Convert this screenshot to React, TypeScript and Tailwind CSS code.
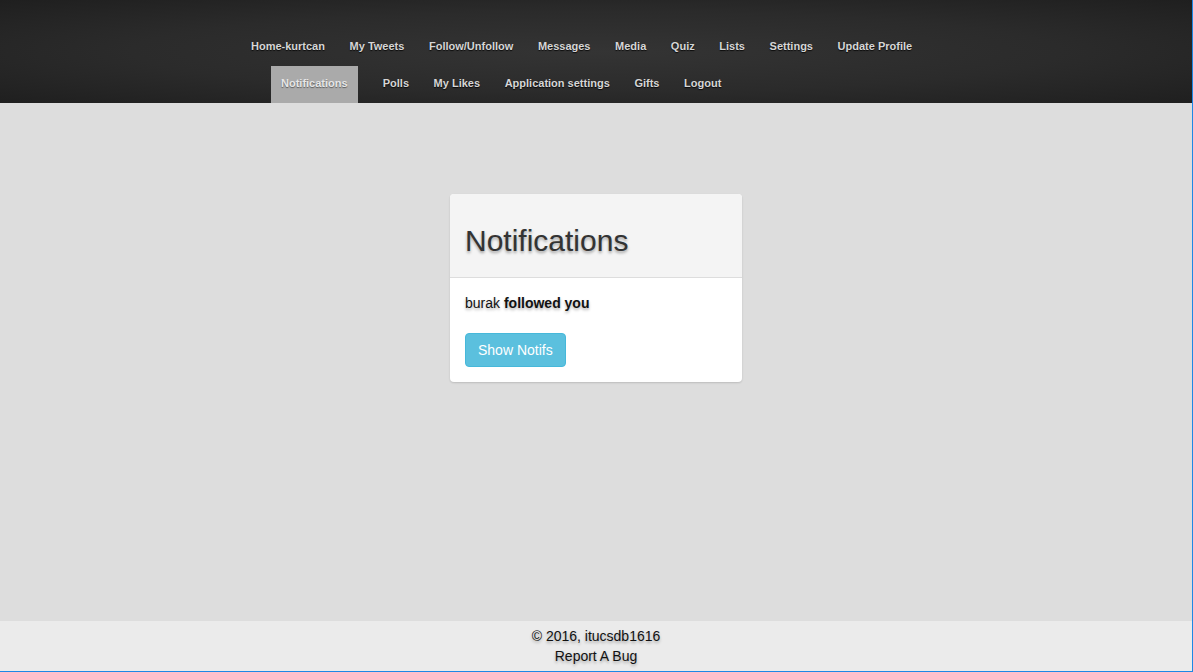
import React from "react";

const topRow = [
  "Home-kurtcan",
  "My Tweets",
  "Follow/Unfollow",
  "Messages",
  "Media",
  "Quiz",
  "Lists",
  "Settings",
  "Update Profile",
];

const bottomRow = ["Polls", "My Likes", "Application settings", "Gifts", "Logout"];

function NavItem({ label, active = false }: { label: string; active?: boolean }) {
  return (
    <a
      href="#"
      className={`flex h-[37px] items-center px-[10px] pb-[2px] text-[11px] font-bold leading-none ${
        active
          ? "mr-[10.5px] bg-[#aaaaaa] text-[#e6e6e6] [text-shadow:0_1px_1px_rgba(0,0,0,0.45)]"
          : "text-[#d6d6d6] [text-shadow:0_1px_1px_rgba(0,0,0,0.8)]"
      }`}
    >
      {label}
    </a>
  );
}

export default function App() {
  return (
    <div className="flex h-screen flex-col border-r border-b border-[#1e88e5] bg-[#dddddd] font-['Liberation_Sans',Arial,sans-serif]">
      {/* header / nav */}
      <header className="h-[103px] shrink-0 bg-[radial-gradient(ellipse_at_center,#343434_0%,#2b2b2b_55%,#1f1f1f_100%)] pt-[29px]">
        <nav className="flex gap-[4.6px] pl-[241px]">
          {topRow.map((item) => (
            <NavItem key={item} label={item} />
          ))}
        </nav>
        <nav className="flex gap-[4.6px] pl-[271px]">
          <NavItem label="Notifications" active />
          {bottomRow.map((item) => (
            <NavItem key={item} label={item} />
          ))}
        </nav>
      </header>

      {/* main */}
      <main className="flex flex-1 justify-center pt-[91px]">
        <div className="h-fit w-[292px] overflow-hidden rounded-[4px] bg-white shadow-[0_1px_2px_rgba(0,0,0,0.15)]">
          <div className="border-b border-[#dddddd] bg-[#f4f4f4] px-[15px] py-[10px]">
            <h2 className="mt-[20px] mb-[10px] text-[30px] leading-[33px] text-[#333333] [text-shadow:0_2px_3px_rgba(0,0,0,0.35)]">
              Notifications
            </h2>
          </div>
          <div className="p-[15px]">
            <p className="mb-[20px] text-[14px] leading-[20px] text-[#111] [text-shadow:0_2px_3px_rgba(0,0,0,0.3)]">
              burak <b>followed you</b>
            </p>
            <button className="h-[34px] rounded-[4px] border border-[#46b8da] bg-[#5bc0de] px-[12px] text-[14px] leading-[20px] text-white">
              Show Notifs
            </button>
          </div>
        </div>
      </main>

      {/* footer */}
      <footer className="h-[50px] shrink-0 bg-[#ebebeb] pt-[5px] text-center text-[14px] leading-[20px] text-[#111] [text-shadow:0_2px_3px_rgba(0,0,0,0.3)]">
        <p>© 2016, itucsdb1616</p>
        <a href="#" className="block">
          Report A Bug
        </a>
      </footer>
    </div>
  );
}
